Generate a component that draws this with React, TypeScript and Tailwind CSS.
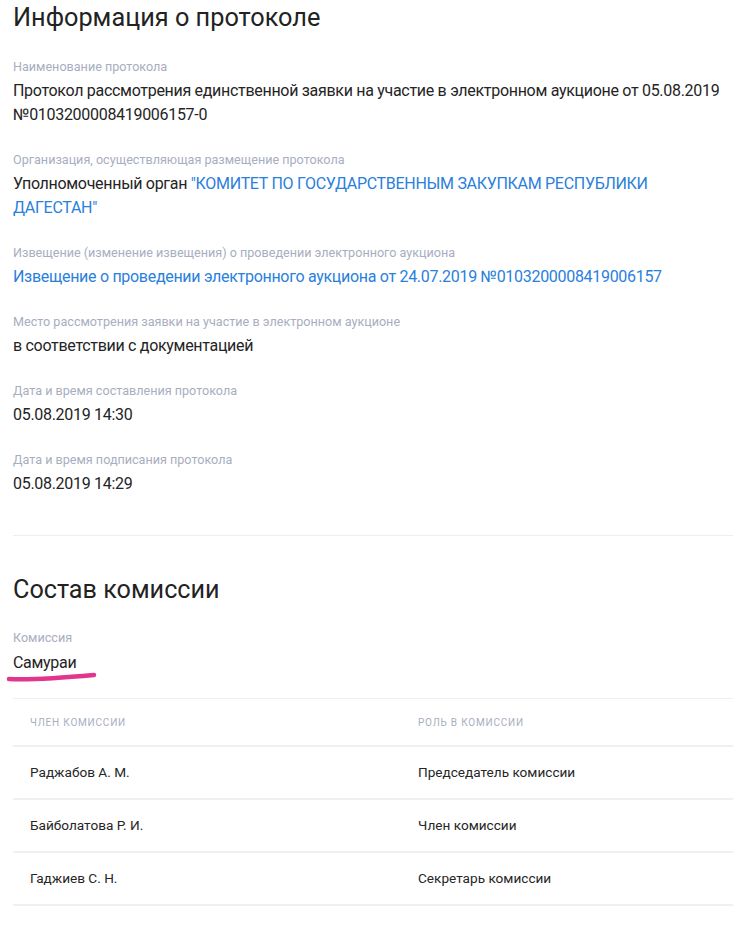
import React from "react";

const Field = ({ label, children }: { label: string; children: React.ReactNode }) => (
  <div className="mb-[25px]">
    <div className="text-[12.6px] leading-[16px] text-[#a7aec0]">{label}</div>
    <div className="mt-[4px] text-[16px] leading-[24px] tracking-[-0.3px] text-[#242424]">{children}</div>
  </div>
);

const rows = [
  ["Раджабов А. М.", "Председатель комиссии"],
  ["Байболатова Р. И.", "Член комиссии"],
  ["Гаджиев С. Н.", "Секретарь комиссии"],
];

export default function App() {
  return (
    <div className="min-h-[929px] bg-white pl-[13px]" style={{ fontFamily: "Roboto, 'Noto Sans', sans-serif" }}>
      <h1 className="text-[25.3px] leading-[36px] text-[#222] font-normal">Информация о протоколе</h1>
      <div className="mt-[23px]">
        <Field label="Наименование протокола">
          Протокол рассмотрения единственной заявки на участие в электронном аукционе от 05.08.2019 №0103200008419006157-0
        </Field>
        <Field label="Организация, осуществляющая размещение протокола">
          <span>Уполномоченный орган </span>
          <span className="text-[#2a80db]">"КОМИТЕТ ПО ГОСУДАРСТВЕННЫМ ЗАКУПКАМ РЕСПУБЛИКИ ДАГЕСТАН"</span>
        </Field>
        <Field label="Извещение (изменение извещения) о проведении электронного аукциона">
          <span className="text-[#2a80db]">Извещение о проведении электронного аукциона от 24.07.2019 №0103200008419006157</span>
        </Field>
        <Field label="Место рассмотрения заявки на участие в электронном аукционе">в соответствии с документацией</Field>
        <Field label="Дата и время составления протокола">05.08.2019 14:30</Field>
        <Field label="Дата и время подписания протокола">05.08.2019 14:29</Field>
      </div>
      <div className="mt-[39px] h-px bg-[#eceef1]" />
      <h2 className="mt-[38px] text-[25.2px] leading-[32px] text-[#222] font-normal">Состав комиссии</h2>
      <div className="mt-[24px] relative">
        <div className="text-[12.6px] leading-[16px] text-[#a7aec0]">Комиссия</div>
        <div className="mt-[5px] text-[16px] leading-[24px] tracking-[-0.3px] text-[#242424]">Самураи</div>
        <svg className="absolute left-[-7px] top-[41px]" width="92" height="12" viewBox="0 0 92 12">
          <path d="M3 8 C 25 9, 55 7, 88 4" stroke="#e2358c" strokeWidth="4.5" strokeLinecap="round" fill="none" />
        </svg>
      </div>
      <div className="mt-[23px] h-px bg-[#eceef1]" />
      <div className="grid grid-cols-[388px_1fr] h-[46px] items-center pl-[17px] text-[10px] uppercase tracking-[0.08em] text-[#a7aec0]">
        <div>Член комиссии</div>
        <div>Роль в комиссии</div>
      </div>
      <div className="h-[2px] bg-[#eef0f3]" />
      {rows.map(([a, b]) => (
        <div key={a}>
          <div className="grid grid-cols-[388px_1fr] h-[51px] items-center pl-[17px] text-[13.6px] text-[#262626]">
            <div>{a}</div>
            <div>{b}</div>
          </div>
          <div className="h-[2px] bg-[#eef0f3]" />
        </div>
      ))}
    </div>
  );
}
